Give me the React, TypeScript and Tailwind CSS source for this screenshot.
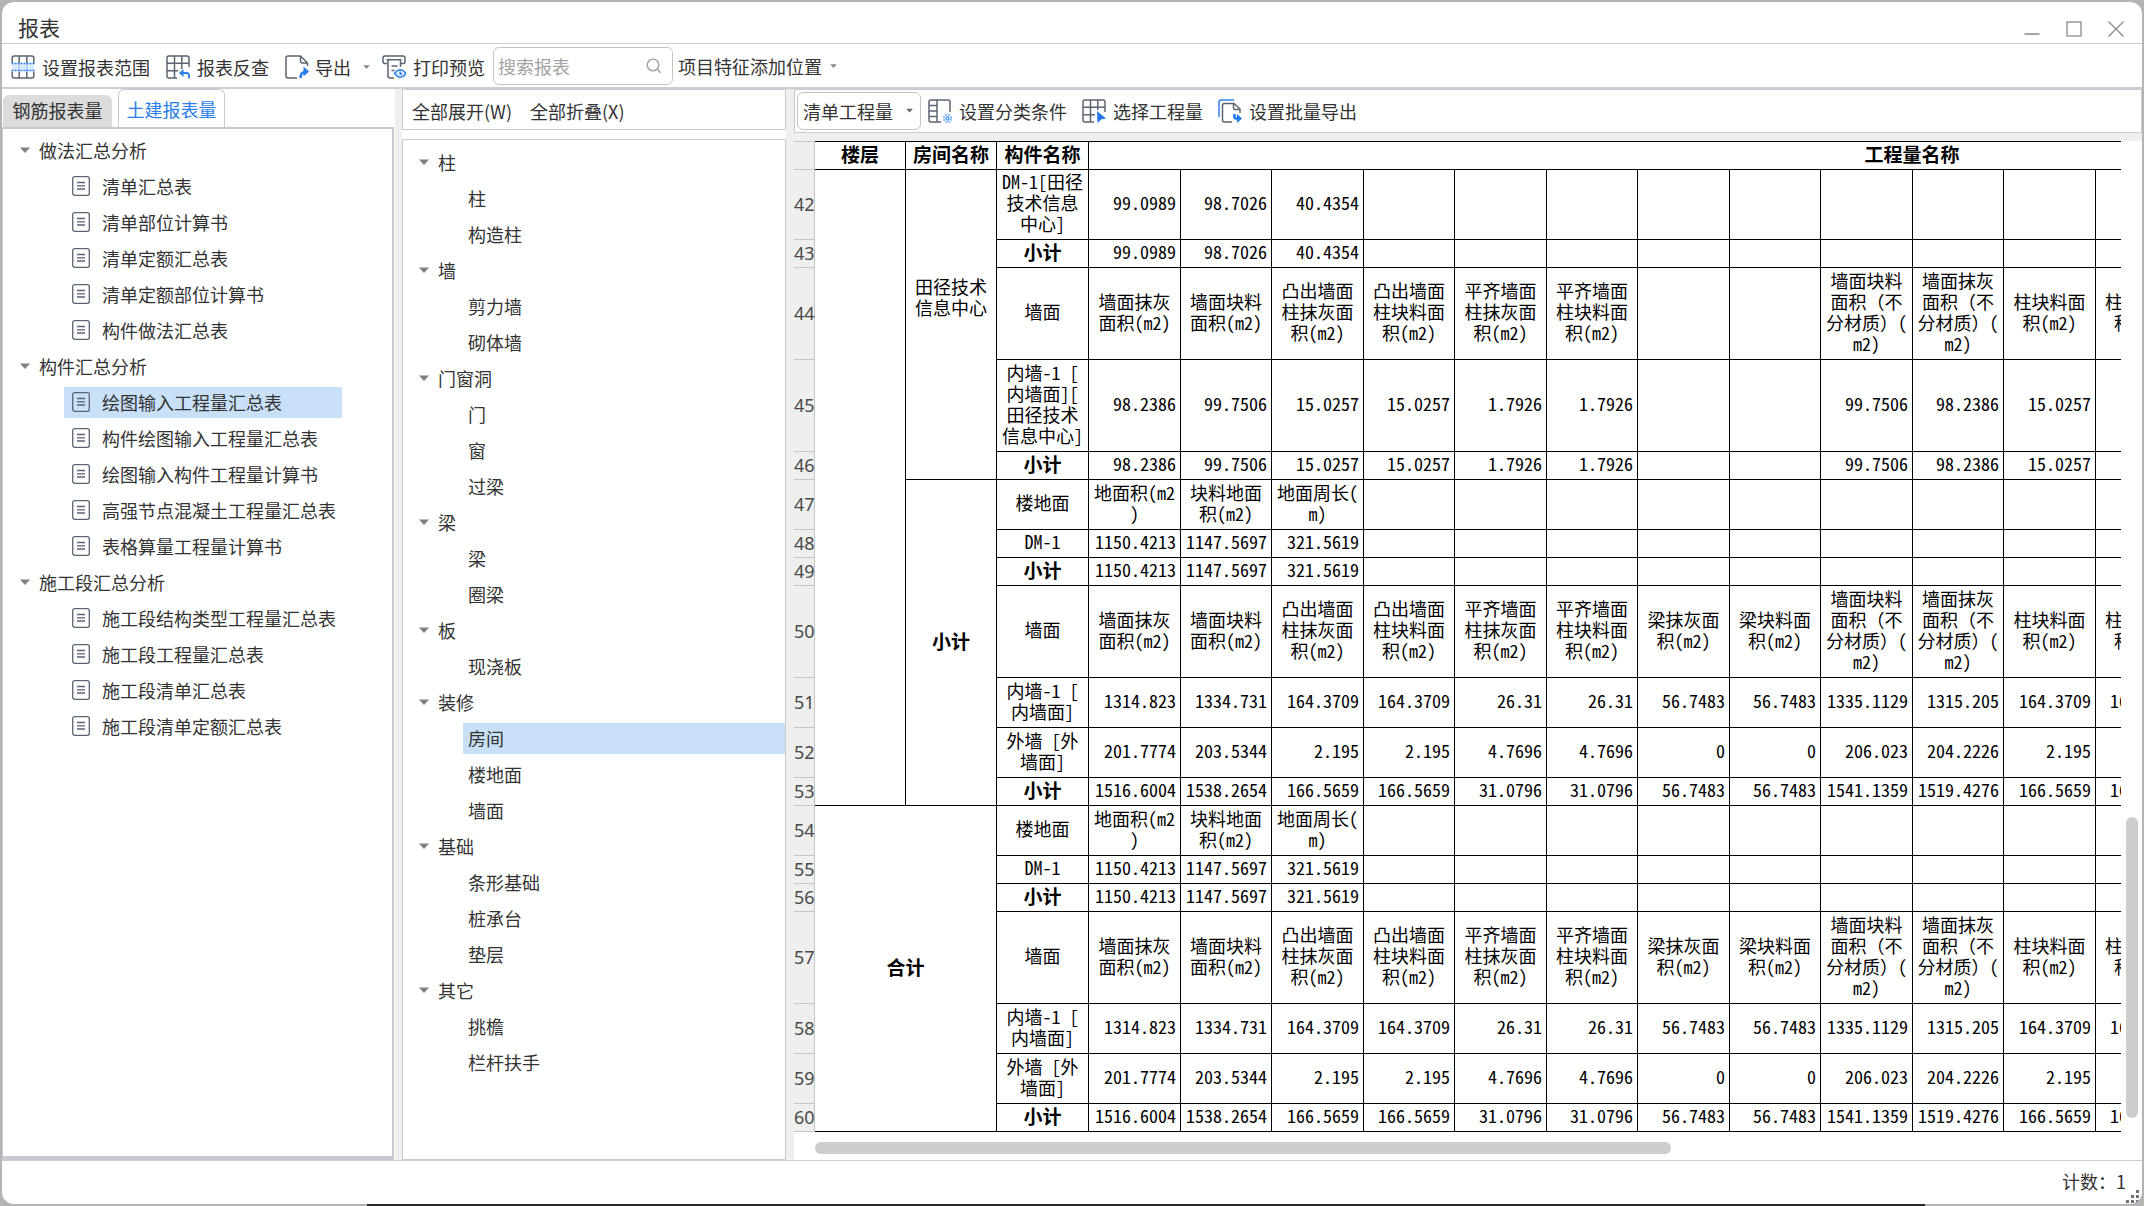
import { useState } from "react";
import type { ReactNode } from "react";
import clsx from "clsx";

interface TreeGroup {
  name: string;
  items: string[];
}

interface ReportRow {
  no: number;
  height: string;
  name: string;
  bold?: boolean;
  heading?: boolean;
  cells: string[];
}

const QTY_COLUMNS = 18;

const reportTree: TreeGroup[] = [
  {
    name: "做法汇总分析",
    items: ["清单汇总表", "清单部位计算书", "清单定额汇总表", "清单定额部位计算书", "构件做法汇总表"],
  },
  {
    name: "构件汇总分析",
    items: [
      "绘图输入工程量汇总表",
      "构件绘图输入工程量汇总表",
      "绘图输入构件工程量计算书",
      "高强节点混凝土工程量汇总表",
      "表格算量工程量计算书",
    ],
  },
  {
    name: "施工段汇总分析",
    items: ["施工段结构类型工程量汇总表", "施工段工程量汇总表", "施工段清单汇总表", "施工段清单定额汇总表"],
  },
];

const memberTree: TreeGroup[] = [
  { name: "柱", items: ["柱", "构造柱"] },
  { name: "墙", items: ["剪力墙", "砌体墙"] },
  { name: "门窗洞", items: ["门", "窗", "过梁"] },
  { name: "梁", items: ["梁", "圈梁"] },
  { name: "板", items: ["现浇板"] },
  { name: "装修", items: ["房间", "楼地面", "墙面"] },
  { name: "基础", items: ["条形基础", "桩承台", "垫层"] },
  { name: "其它", items: ["挑檐", "栏杆扶手"] },
];

// Row heights
const SMALL = "h-[28px]";
const MEDIUM = "h-[50px]";
const LARGE = "h-[70px]";
const TALL = "h-[92px]";

const floorHeads = ["地面积(m2\n)", "块料地面\n积(m2)", "地面周长(\nm)"];
const wallHeads = [
  "墙面抹灰\n面积(m2)",
  "墙面块料\n面积(m2)",
  "凸出墙面\n柱抹灰面\n积(m2)",
  "凸出墙面\n柱块料面\n积(m2)",
  "平齐墙面\n柱抹灰面\n积(m2)",
  "平齐墙面\n柱块料面\n积(m2)",
];
const beamHeads = ["梁抹灰面\n积(m2)", "梁块料面\n积(m2)"];
const tailHeads = [
  "墙面块料\n面积（不\n分材质）(\nm2)",
  "墙面抹灰\n面积（不\n分材质）(\nm2)",
  "柱块料面\n积(m2)",
  "柱抹灰面\n积(m2)",
];

const floorValues = ["1150.4213", "1147.5697", "321.5619"];
const roomWall = [
  "98.2386", "99.7506", "15.0257", "15.0257", "1.7926", "1.7926",
  "", "", "99.7506", "98.2386", "15.0257",
];
const innerWall = [
  "1314.823", "1334.731", "164.3709", "164.3709", "26.31", "26.31",
  "56.7483", "56.7483", "1335.1129", "1315.205", "164.3709", "164.3709",
];
const outerWall = [
  "201.7774", "203.5344", "2.195", "2.195", "4.7696", "4.7696",
  "0", "0", "206.023", "204.2226", "2.195", "2.195",
];
const wallTotal = [
  "1516.6004", "1538.2654", "166.5659", "166.5659", "31.0796", "31.0796",
  "56.7483", "56.7483", "1541.1359", "1519.4276", "166.5659", "166.5659",
];

// The same seven rows close both the floor and the whole report
const summaryRows = (start: number): ReportRow[] => [
  { no: start, height: MEDIUM, name: "楼地面", heading: true, cells: floorHeads },
  { no: start + 1, height: SMALL, name: "DM-1", cells: floorValues },
  { no: start + 2, height: SMALL, name: "小计", bold: true, cells: floorValues },
  { no: start + 3, height: TALL, name: "墙面", heading: true, cells: [...wallHeads, ...beamHeads, ...tailHeads] },
  { no: start + 4, height: MEDIUM, name: "内墙-1 [\n内墙面]", cells: innerWall },
  { no: start + 5, height: MEDIUM, name: "外墙 [外\n墙面]", cells: outerWall },
  { no: start + 6, height: SMALL, name: "小计", bold: true, cells: wallTotal },
];

const rows: ReportRow[] = [
  { no: 42, height: LARGE, name: "DM-1[田径\n技术信息\n中心]", cells: ["99.0989", "98.7026", "40.4354"] },
  { no: 43, height: SMALL, name: "小计", bold: true, cells: ["99.0989", "98.7026", "40.4354"] },
  { no: 44, height: TALL, name: "墙面", heading: true, cells: [...wallHeads, "", "", ...tailHeads] },
  { no: 45, height: TALL, name: "内墙-1 [\n内墙面][\n田径技术\n信息中心]", cells: roomWall },
  { no: 46, height: SMALL, name: "小计", bold: true, cells: roomWall },
  ...summaryRows(47),
  ...summaryRows(54),
];

const Caret = ({ className }: { className?: string }) => (
  <svg viewBox="0 0 10 6" className={clsx("shrink-0", className)} fill="currentColor">
    <path d="M0 0.5h10L5 6z" />
  </svg>
);

const Icon = ({ children }: { children: ReactNode }) => (
  <svg
    viewBox="0 0 24 24"
    className="h-6 w-6 shrink-0"
    fill="none"
    stroke="#5b6472"
    strokeWidth="1.5"
    strokeLinejoin="round"
  >
    {children}
  </svg>
);

const RangeIcon = () => (
  <Icon>
    <path d="M1.2 8V3q0-2 2-2h17.6q2 0 2 2v5M1.2 16.5V21q0 2 2 2h17.6q2 0 2-2v-4.500M8.200 1v7M15.800 1v7M8.200 16.500V23M15.800 16.500V23" />
    <path d="M1 8.500h22v7H1z" fill="#dcebff" stroke="none" />
    <path d="M8.200 9v6.500M15.800 9v6.500" stroke="#a9c9f7" />
    <path d="M0.500 8.500h23M0.500 15.500h23" stroke="#2f80ed" strokeDasharray="2 1" />
  </Icon>
);

const TraceIcon = () => (
  <Icon>
    <path d="M11 23H3q-2 0-2-2V3q0-2 2-2h18q2 0 2 2v9M8.500 1v22M15.800 1v13M1 8.200h22M1 15.800h11" />
    <path d="M23 23.500v-3q0-2.500-2.500-2.500H15" stroke="#2b7de9" strokeWidth="1.800" />
    <path d="M17.500 14v8L13 18z" fill="#2b7de9" stroke="none" />
  </Icon>
);

const ExportIcon = () => (
  <Icon>
    <path d="M12 23H3q-2 0-2-2V3q0-2 2-2h12.500L22.500 8v3M15.500 1v5q0 2 2 2h5" />
    <path d="M15.500 23q0-6 5-6" stroke="#2b7de9" strokeWidth="2.500" />
    <path d="M18.500 11.500L24 16.500l-5.500 5z" fill="#2b7de9" stroke="none" />
  </Icon>
);

const PreviewIcon = () => (
  <Icon>
    <path d="M5 8.500H3q-2 0-2-2V3q0-2 2-2h18q2 0 2 2v3.500q0 2-2 2h-2M4.500 4.800h15M6 5v16q0 2 2 2h4M18.500 5v7M9.500 11h6M9.500 15.500h3" />
    <path d="M12.500 18.500q6-7.500 11.500 0q-5.500 7.500-11.500 0z" stroke="#2f80ed" fill="#e3efff" />
    <path d="M18.200 16.500v2.500h2" stroke="#2f80ed" />
  </Icon>
);

const ClassifyIcon = () => (
  <Icon>
    <path d="M13 23H3q-2 0-2-2V3q0-2 2-2h17q2 0 2 2v10M9 1v22M1 6.500h8M1 12h8M1 17.500h8" />
    <circle cx="19.500" cy="19.500" r="3.800" stroke="#8dbcf8" strokeWidth="2" strokeDasharray="2 1" />
    <circle cx="19.500" cy="19.500" r="1.500" stroke="#5b9ff3" />
  </Icon>
);

const PickIcon = () => (
  <Icon>
    <path d="M12 23H3q-2 0-2-2V3q0-2 2-2h18q2 0 2 2v10M8.500 1v22M15.800 1v10M1 8.200h22M1 15.800h12" />
    <path d="M15 12l9 7.500-4.500.8L15.500 24z" fill="#1f78f0" stroke="none" />
  </Icon>
);

const BatchExportIcon = () => (
  <Icon>
    <path d="M1 18V3q0-2 2-2h13" stroke="#2f80ed" />
    <path d="M14 23H6.500q-2 0-2-2V6.500q0-2 2-2H16L22 10v4M15.500 4.500V9q0 1.500 1.500 1.500h5" />
    <path d="M16.500 15v3q0 1.500 1.500 1.500h2" stroke="#1f78f0" strokeWidth="2.500" />
    <path d="M19 15l5 4.500-5 4.500z" fill="#1f78f0" stroke="none" />
  </Icon>
);

const ReportIcon = () => (
  <svg viewBox="0 0 18 20" className="h-5 w-[18px] shrink-0" fill="none" stroke="#5b6472" strokeWidth="1.3">
    <rect x="0.7" y="0.7" width="16.600" height="18.600" rx="2" />
    <path d="M5 6.500h8M5 9.800h8M5 13h8" />
  </svg>
);

const ToolButton = ({ icon, label }: { icon: ReactNode; label: string }) => (
  <button className="flex items-center gap-[7px] whitespace-nowrap">
    {icon}
    <span>{label}</span>
  </button>
);

const WindowTitle = () => (
  <header className="flex h-[42px] items-center justify-between border-b border-[#c9ced3] pr-[18px] pl-4">
    <h1 className="pt-2 text-[21px] leading-6">报表</h1>
    <div className="flex gap-[26px] pt-3 text-[#8a8a8a]">
      <button aria-label="最小化">
        <svg viewBox="0 0 16 16" className="h-4 w-4" stroke="currentColor" strokeWidth="1.3">
          <path d="M0.500 13h15" />
        </svg>
      </button>
      <button aria-label="最大化">
        <svg viewBox="0 0 16 16" className="h-4 w-4" stroke="currentColor" strokeWidth="1.3" fill="none">
          <rect x="1" y="1" width="14" height="14" />
        </svg>
      </button>
      <button aria-label="关闭">
        <svg viewBox="0 0 16 16" className="h-4 w-4" stroke="currentColor" strokeWidth="1.3">
          <path d="M0.500 0.500l15 15M15.500 0.500l-15 15" />
        </svg>
      </button>
    </div>
  </header>
);

const Toolbar = () => (
  <div className="flex h-[45px] items-center border-b-2 border-[#c9cdd4] pl-[9px]">
    <div className="flex items-center gap-4 pt-[2px]">
      <ToolButton icon={<RangeIcon />} label="设置报表范围" />
      <ToolButton icon={<TraceIcon />} label="报表反查" />
      <button className="flex items-center gap-[6px]">
        <ExportIcon />
        <span>导出</span>
        <Caret className="ml-[6px] h-1 w-[7px] text-[#8a8a8a]" />
      </button>
    </div>
    <div className="flex items-center pt-[2px] pl-3">
      <ToolButton icon={<PreviewIcon />} label="打印预览" />
    </div>
    <label className="ml-2 flex h-[38px] w-[180px] items-center rounded-md border border-[#c4c4c4] pr-[10px] pl-1">
      <input
        type="text"
        aria-label="搜索报表"
        placeholder="搜索报表"
        className="w-full min-w-0 outline-none placeholder:text-[#a3a3a3]"
      />
      <svg viewBox="0 0 16 16" className="h-4 w-4 shrink-0" fill="none" stroke="#a8a8a8" strokeWidth="1.500">
        <circle cx="7" cy="7" r="5.800" />
        <path d="M11.200 11.200L15 15" />
      </svg>
    </label>
    <button className="flex items-center gap-2 pl-[5px] whitespace-nowrap">
      项目特征添加位置
      <Caret className="h-1 w-[7px] text-[#8a8a8a]" />
    </button>
  </div>
);

const ReportTree = () => {
  const [selected, setSelected] = useState("绘图输入工程量汇总表");

  return (
    <ul className="pt-[3px]">
      {reportTree.map((group) => (
        <li key={group.name}>
          <button className="flex h-9 items-center gap-[9px] pl-[17px]">
            <Caret className="h-[6px] w-[10px] text-[#808080]" />
            {group.name}
          </button>
          <ul className="pl-[61px]">
            {group.items.map((item) => (
              <li key={item} className="flex h-9 items-center">
                <button
                  onClick={() => setSelected(item)}
                  className={clsx(
                    "flex h-[31px] w-[278px] items-center gap-3 pl-2 whitespace-nowrap",
                    item === selected && "bg-[#c9e0f9]"
                  )}
                >
                  <ReportIcon />
                  {item}
                </button>
              </li>
            ))}
          </ul>
        </li>
      ))}
    </ul>
  );
};

const MemberTree = () => {
  const [selected, setSelected] = useState("房间");

  return (
    <ul className="pt-1">
      {memberTree.map((group) => (
        <li key={group.name}>
          <button className="flex h-9 items-center gap-[9px] pl-4">
            <Caret className="h-[6px] w-[10px] text-[#808080]" />
            {group.name}
          </button>
          <ul className="pl-[60px]">
            {group.items.map((item) => (
              <li key={item} className="flex h-9 items-center">
                <button
                  onClick={() => setSelected(item)}
                  className={clsx("h-[31px] w-full pl-[5px] text-left", item === selected && "bg-[#c9e0f9]")}
                >
                  {item}
                </button>
              </li>
            ))}
          </ul>
        </li>
      ))}
    </ul>
  );
};

const grid = "border-r border-b border-black px-0 pt-0 whitespace-pre";
const cell = `${grid} pb-1`;
const rowHead = "border-r border-b border-[#c6c6c6] bg-[#efefef] p-0 font-normal";

const ReportTable = () => (
  <table className="w-[1942px] table-fixed border-separate border-spacing-0 font-['Noto_Sans_Mono_CJK_SC','Noto_Sans_CJK_SC',monospace] text-[18px] leading-[21px] text-black">
    <colgroup>
      <col className="w-[21px]" />
      <col className="w-[91px]" />
      <col className="w-[91px]" />
      <col className="w-[92px]" />
      {Array.from({ length: QTY_COLUMNS }, (_, i) => (
        <col key={i} className={i % 2 ? "w-[91px]" : "w-[92px]"} />
      ))}
    </colgroup>
    <thead>
      <tr className="h-[29px] text-[19px]">
        <td className={clsx(rowHead, "border-t")} />
        <th className={clsx(cell, "border-t")}>楼层</th>
        <th className={clsx(cell, "border-t")}>房间名称</th>
        <th className={clsx(cell, "border-t")}>构件名称</th>
        <th colSpan={QTY_COLUMNS} className={clsx(cell, "border-t")}>
          工程量名称
        </th>
      </tr>
    </thead>
    <tbody>
      {rows.map((row) => (
        <tr key={row.no} className={row.height}>
          <th
            className={clsx(rowHead, "font-['Noto_Sans','Noto_Sans_CJK_SC',sans-serif] text-[18px] text-[#4a4a4a]")}
          >
            {row.no}
          </th>
          {row.no === 42 && <td rowSpan={12} className={cell} />}
          {row.no === 42 && (
            <td rowSpan={5} className={clsx(grid, "pb-14 text-center")}>
              {"田径技术\n信息中心"}
            </td>
          )}
          {row.no === 47 && (
            <td rowSpan={7} className={clsx(cell, "text-center text-[19px] font-bold")}>
              小计
            </td>
          )}
          {row.no === 54 && (
            <td rowSpan={7} colSpan={2} className={clsx(cell, "text-center text-[19px] font-bold")}>
              合计
            </td>
          )}
          <td className={clsx(cell, "text-center", row.bold && "text-[19px] font-bold")}>{row.name}</td>
          {Array.from({ length: QTY_COLUMNS }, (_, i) => (
            <td key={i} className={clsx(cell, row.heading ? "text-center" : "pr-1 text-right")}>
              {row.cells[i]}
            </td>
          ))}
        </tr>
      ))}
    </tbody>
  </table>
);

const App = () => {
  const [tab, setTab] = useState("土建报表量");

  return (
    <div className="flex min-h-screen flex-col bg-[#b4b4b4] px-[2px] pt-[2px] font-['Noto_Sans_CJK_SC',sans-serif] text-[18px] leading-6 text-[#333]">
      <div className="flex flex-1 flex-col overflow-hidden rounded-xl bg-white">
        <WindowTitle />
        <Toolbar />

        <main className="flex flex-1">
          <section className="flex w-[393px] shrink-0 flex-col">
            <div className="flex h-[38px] items-end gap-[6px] pl-px">
              {["钢筋报表量", "土建报表量"].map((name) => (
                <button
                  key={name}
                  onClick={() => setTab(name)}
                  className={clsx(
                    "rounded-t-md",
                    name === tab
                      ? "h-[38px] w-[107px] border border-b-0 border-[#c5cad0] text-[#2b7de9]"
                      : "h-8 w-[109px] bg-[#dcdcdc] pb-[2px]"
                  )}
                >
                  {name}
                </button>
              ))}
            </div>
            <div className="mr-px flex-1 border-2 border-b-4 border-l border-[#c5cad0]">
              <ReportTree />
            </div>
          </section>

          <div className="w-[7px] shrink-0 bg-[#efefef]" />

          <section className="flex w-[384px] shrink-0 flex-col">
            <div className="flex h-[41px] items-center gap-[18px] border border-[#c9cdd1] pt-[2px] pl-[9px]">
              <button>全部展开(W)</button>
              <button>全部折叠(X)</button>
            </div>
            <div className="mt-[9px] flex-1 border border-[#c9cdd1]">
              <MemberTree />
            </div>
          </section>

          <div className="w-2 shrink-0 bg-[#efefef]" />

          <section className="flex min-w-0 flex-1 flex-col">
            <div className="flex h-[44px] items-center gap-[15px] border border-[#c9cdd1] pl-[2px]">
              <div className="relative -mr-2">
                <select
                  aria-label="工程量类型"
                  className="h-[38px] w-[124px] appearance-none rounded-md border border-[#c4c4c4] bg-white pl-[5px]"
                >
                  <option>清单工程量</option>
                </select>
                <Caret className="pointer-events-none absolute top-4 right-2 h-[5px] w-[7px] text-[#6b6b6b]" />
              </div>
              <ToolButton icon={<ClassifyIcon />} label="设置分类条件" />
              <ToolButton icon={<PickIcon />} label="选择工程量" />
              <ToolButton icon={<BatchExportIcon />} label="设置批量导出" />
            </div>
            <div className="h-2 bg-[#efefef]" />
            <div className="flex">
              <div className="min-w-0 flex-1 overflow-hidden">
                <ReportTable />
              </div>
              <div className="flex w-[21px] shrink-0 flex-col justify-end pb-[14px] pl-[5px]">
                <div className="h-[301px] w-3 rounded-full bg-[#cdcdcd]" />
              </div>
            </div>
            <div className="flex flex-1 items-center pt-1 pl-[21px]">
              <div className="h-3 w-[856px] rounded-full bg-[#cdcdcd]" />
            </div>
          </section>
        </main>

        <footer className="flex h-[44px] items-center justify-end border-t border-[#c9ced3] pr-[2px]">
          <span className="pb-1">计数：1</span>
          <svg viewBox="0 0 14 14" className="h-[14px] w-[14px] self-end" fill="#6b7280">
            <path d="M10 0h3v3h-3zM5 5h3v3H5zM10 5h3v3h-3zM0 10h3v3H0zM5 10h3v3H5zM10 10h3v3h-3z" />
          </svg>
        </footer>
      </div>

      <div className="mr-[217px] ml-[365px] h-[2px] bg-[#2b2b2b]" />
    </div>
  );
};

export default App;
